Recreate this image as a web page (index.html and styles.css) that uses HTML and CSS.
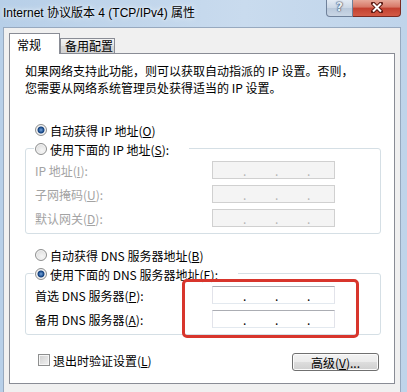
FILE: index.html
```html
<!DOCTYPE html>
<html lang="zh-CN">
<head>
    <meta charset="UTF-8">
    <meta name="viewport" content="width=device-width, initial-scale=1.0">
    <title>Internet 协议版本 4 (TCP/IPv4) 属性</title>
    <link rel="stylesheet" href="styles.css">
</head>
<body>

    <div class="window">
        <div class="titlebar">
            <span class="title">Internet 协议版本 4 (TCP/IPv4) 属性</span>
            <div class="caption">
                <span class="cap-help">?</span>
                <span class="cap-close">
                    <svg width="12" height="11" viewBox="0 0 12 11">
                        <path d="M2 1.5 L10 9.5 M10 1.5 L2 9.5" stroke="#5a1710" stroke-width="4" stroke-linecap="square"/>
                        <path d="M2 1.5 L10 9.5 M10 1.5 L2 9.5" stroke="#ffffff" stroke-width="2"/>
                    </svg>
                </span>
            </div>
        </div>

        <div class="client">
            <div class="tabs">
                <div class="tab active">常规</div>
                <div class="tab">备用配置</div>
            </div>

            <div class="panel">
                <p class="intro">如果网络支持此功能，则可以获取自动指派的 IP 设置。否则，<br>您需要从网络系统管理员处获得适当的 IP 设置。</p>

                <label class="radio radio-first"><span class="mark checked"></span>自动获得 IP 地址(<u>O</u>)</label>

                <div class="group group-ip">
                    <label class="radio group-title"><span class="mark"></span>使用下面的 IP 地址(<u>S</u>):</label>
                    <div class="row disabled">
                        <span class="label">IP 地址(<u>I</u>):</span>
                        <span class="ip"><i>.</i><i>.</i><i>.</i></span>
                    </div>
                    <div class="row disabled">
                        <span class="label">子网掩码(<u>U</u>):</span>
                        <span class="ip"><i>.</i><i>.</i><i>.</i></span>
                    </div>
                    <div class="row disabled">
                        <span class="label">默认网关(<u>D</u>):</span>
                        <span class="ip"><i>.</i><i>.</i><i>.</i></span>
                    </div>
                </div>

                <label class="radio radio-dns"><span class="mark"></span>自动获得 DNS 服务器地址(<u>B</u>)</label>

                <div class="group group-dns">
                    <label class="radio group-title"><span class="mark checked"></span>使用下面的 DNS 服务器地址(<u>E</u>):</label>
                    <div class="row">
                        <span class="label">首选 DNS 服务器(<u>P</u>):</span>
                        <span class="ip"><i>.</i><i>.</i><i>.</i></span>
                    </div>
                    <div class="row">
                        <span class="label">备用 DNS 服务器(<u>A</u>):</span>
                        <span class="ip"><i>.</i><i>.</i><i>.</i></span>
                    </div>
                </div>

                <div class="bottom">
                    <label class="check"><span class="box"></span>退出时验证设置(<u>L</u>)</label>
                    <button class="btn">高级(<u>V</u>)...</button>
                </div>

                <!-- red highlight drawn over the DNS fields -->
                <div class="highlight"></div>
            </div>
        </div>
    </div>

</body>
</html>
```

FILE: styles.css
```css
* {
    margin: 0;
    padding: 0;
    box-sizing: border-box;
}

body {
    width: 407px;
    height: 392px;
    overflow: hidden;
    font-family: "Noto Sans CJK SC", sans-serif;
    font-size: 12px;
    color: #000;
    background: linear-gradient(to right, #b7cfe8, #c9dbee 60%, #bfd4ea);
}

.window {
    display: flex;
    flex-direction: column;
    height: 392px;
}

.titlebar {
    height: 27px;
    display: flex;
    justify-content: space-between;
    align-items: flex-start;
    padding: 0 6px 0 3px;
}

.titlebar .title {
    font-family: "Liberation Sans", "Noto Sans CJK SC", sans-serif;
    font-size: 12px;
    line-height: 26px;
    text-shadow: 0 0 6px #eef4fb, 0 0 3px #eef4fb;
}

.caption {
    display: flex;
    height: 17px;
}

.cap-help {
    width: 27px;
    height: 17px;
    border: 1px solid #6f819a;
    border-top: none;
    border-radius: 0 0 0 4px;
    background: linear-gradient(#e3ebf4, #cbd7e5 50%, #b9c8da 51%, #c9d6e5);
    color: #e9eff6;
    font-family: "DejaVu Sans", sans-serif;
    font-weight: bold;
    font-size: 12px;
    line-height: 15px;
    text-align: center;
    text-shadow: 0 0 1px #43556e, 0 0 1px #43556e, 0 0 2px #43556e;
}

.cap-close {
    width: 48px;
    height: 17px;
    border: 1px solid #7a2a22;
    border-left: none;
    border-top: none;
    border-radius: 0 0 4px 0;
    background: linear-gradient(#e7a899, #d77766 45%, #c2402f 50%, #d35a45);
    display: flex;
    align-items: center;
    justify-content: center;
    padding-bottom: 1px;
}

.client {
    flex: 1;
    margin: 0 6px 0 3px;
    background-color: #f0f0f0;
    border: 1px solid #97a9bf;
    border-bottom: none;
    padding: 5px 5px 0 5px;
}

.tabs {
    display: flex;
    align-items: flex-end;
    height: 20px;
}

.tab {
    width: 55px;
    height: 15px;
    padding-left: 4px;
    line-height: 14px;
    border: 1px solid #898c95;
    border-bottom: none;
    background: linear-gradient(#f3f3f3, #e6e6e6 50%, #d9d9d9 51%, #d2d2d2);
}

.tab.active {
    width: 51px;
    height: 21px;
    margin-bottom: -1px;
    padding: 2px 0 0 7px;
    line-height: 18px;
    background: #fff;
    position: relative;
    z-index: 1;
}

.panel {
    position: relative;
    width: 386px;
    height: 331px;
    background: #fff;
    border: 1px solid #898c95;
    padding-top: 8px;
}

.intro {
    margin-left: 15px;
    line-height: 17px;
}

.radio {
    display: flex;
    align-items: center;
    height: 20px;
    width: fit-content;
}

.radio .mark {
    width: 12px;
    height: 12px;
    margin-right: 3px;
    border-radius: 50%;
    border: 1px solid #8e8f8f;
    background: radial-gradient(circle at 60% 65%, #f6f6f6, #d6d6d6);
    box-shadow: inset 0 0 0 1px #f4f4f4;
}

.radio .mark.checked {
    background: radial-gradient(circle, #7aa6da 0, #2d5f9e 2px, #123e7a 3px, #f2f2f2 4px, #dadada 6px);
}

.radio-first {
    margin: 24px 0 0 25px;
}

.radio-dns {
    margin: 11px 0 0 25px;
}

.group {
    margin: 8px 13px 0 15px;
    border: 1px solid #d5dfe5;
    border-radius: 3px;
    padding-bottom: 3px;
}

.group-title {
    height: 18px;
    margin: -9px 0 0 8px;
    padding: 0 20px 0 1px;
    background: #fff;
}

.row {
    display: flex;
    align-items: center;
    height: 24px;
    padding-left: 9px;
}

.row .label {
    width: 177px;
}

.ip {
    display: flex;
    width: 123px;
    height: 18px;
    padding-left: 30px;
    gap: 29px;
    background: #fff;
    border: 1px solid #e2e3ea;
    border-top-color: #abadb3;
    border-bottom-color: #e3e9ef;
}

.ip i {
    font-style: normal;
    width: 3px;
    line-height: 17px;
}

.row.disabled {
    color: #a3a3a3;
}

.row.disabled .ip {
    background: #f4f4f4;
    border-color: #d0d0d0;
    color: #b4b4b4;
}

.bottom {
    display: flex;
    justify-content: space-between;
    height: 18px;
    margin: 18px 15px 0 28px;
}

.check {
    display: flex;
    align-items: center;
    height: 14px;
}

.check .box {
    width: 12px;
    height: 12px;
    margin-right: 3px;
    border: 1px solid #8e8f8f;
    background: linear-gradient(135deg, #cfcfcf, #f2f2f2);
    box-shadow: inset 0 0 0 1px #f6f6f6;
}

.btn {
    width: 87px;
    height: 18px;
    font-family: "Noto Sans CJK SC", sans-serif;
    font-size: 12px;
    line-height: 15px;
    color: #000;
    border: 1px solid #707070;
    border-radius: 3px;
    background: linear-gradient(#f2f2f2, #ebebeb 50%, #dddddd 51%, #cfcfcf);
    box-shadow: inset 0 0 0 1px #fbfbfb;
}

.highlight {
    position: absolute;
    left: 172px;
    top: 225px;
    width: 177px;
    height: 59px;
    border: 3px solid #d8352c;
    border-radius: 5px;
}
```
